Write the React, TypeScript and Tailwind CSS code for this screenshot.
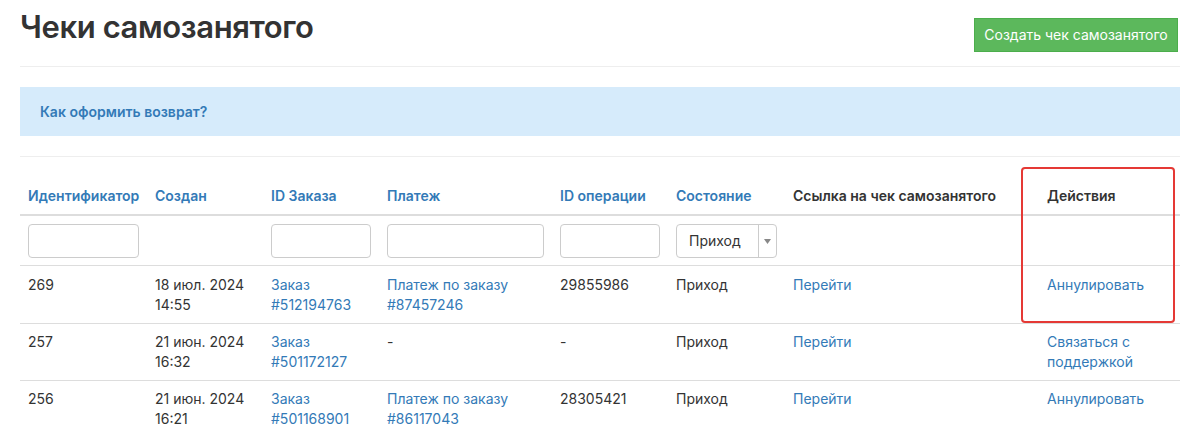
import React from 'react';

type Row = {
  id: string;
  date: string;
  time: string;
  order: string;
  payment: string | null;
  operation: string;
  state: string;
  action: string[];
};

const rows: Row[] = [
  { id: '269', date: '18 июл. 2024', time: '14:55', order: '#512194763', payment: '#87457246', operation: '29855986', state: 'Приход', action: ['Аннулировать'] },
  { id: '257', date: '21 июн. 2024', time: '16:32', order: '#501172127', payment: null, operation: '-', state: 'Приход', action: ['Связаться с', 'поддержкой'] },
  { id: '256', date: '21 июн. 2024', time: '16:21', order: '#501168901', payment: '#86117043', operation: '28305421', state: 'Приход', action: ['Аннулировать'] },
];

const FilterInput: React.FC<{ width: string }> = ({ width }) => (
  <input type="text" className={`${width} h-[34px] rounded-[4px] border border-[#ccc] bg-white block`} />
);

const App: React.FC = () => {
  return (
    <div className="w-[1200px] h-[434px] overflow-hidden bg-white font-['Inter',sans-serif] text-[14px] leading-[20px] text-[#333]">
      <div className="px-[20px] pt-[18px]">
        {/* Header */}
        <div className="flex items-start justify-between h-[34px] mr-[2px]">
          <h1 className="text-[31px] leading-[30px] font-semibold text-[#333] tracking-[-0.4px] -mt-[6px]">Чеки самозанятого</h1>
          <button className="h-[34px] w-[204px] bg-[#5cb85c] text-white text-[14px] border border-[#4cae4c]">
            Создать чек самозанятого
          </button>
        </div>
        <hr className="mt-[14px] border-t border-[#eee]" />

        {/* Info */}
        <div className="mt-[20px] h-[49px] bg-[#d6ebfb] px-[20px] flex items-center">
          <a className="font-semibold text-[#337ab7] text-[14px]">Как оформить возврат?</a>
        </div>
        <hr className="mt-[20px] border-t border-[#eee]" />

        {/* Table */}
        <div className="relative mt-[21px]">
          <table className="w-full table-fixed border-collapse">
            <colgroup>
              <col className="w-[127px]" />
              <col className="w-[116px]" />
              <col className="w-[116px]" />
              <col className="w-[173px]" />
              <col className="w-[116px]" />
              <col className="w-[117px]" />
              <col className="w-[254px]" />
              <col />
            </colgroup>
            <thead>
              <tr className="border-b-2 border-[#ddd] text-left">
                <th className="px-[8px] py-[8px] font-semibold text-[#337ab7] whitespace-nowrap">Идентификатор</th>
                <th className="px-[8px] py-[8px] font-semibold text-[#337ab7]">Создан</th>
                <th className="px-[8px] py-[8px] font-semibold text-[#337ab7]">ID Заказа</th>
                <th className="px-[8px] py-[8px] font-semibold text-[#337ab7]">Платеж</th>
                <th className="px-[8px] py-[8px] font-semibold text-[#337ab7]">ID операции</th>
                <th className="px-[8px] py-[8px] font-semibold text-[#337ab7]">Состояние</th>
                <th className="px-[8px] py-[8px] font-semibold text-[#333] whitespace-nowrap">Ссылка на чек самозанятого</th>
                <th className="px-[8px] py-[8px] font-semibold text-[#333]">Действия</th>
              </tr>
            </thead>
            <tbody>
              <tr className="border-b border-[#ddd]">
                <td className="px-[8px] pt-[8px] pb-[7px] align-top"><FilterInput width="w-[111px]" /></td>
                <td className="px-[8px] py-[8px]"></td>
                <td className="px-[8px] pt-[8px] pb-[7px] align-top"><FilterInput width="w-[100px]" /></td>
                <td className="px-[8px] pt-[8px] pb-[7px] align-top"><FilterInput width="w-[157px]" /></td>
                <td className="px-[8px] pt-[8px] pb-[7px] align-top"><FilterInput width="w-[100px]" /></td>
                <td className="px-[8px] pt-[8px] pb-[7px] align-top">
                  <div className="w-[101px] h-[34px] rounded-[4px] border border-[#ccc] bg-white flex items-center">
                    <span className="flex-1 pl-[12px] text-[#333]">Приход</span>
                    <span className="w-[18px] h-full border-l border-[#ccc] flex items-center justify-center">
                      <svg width="7" height="5" viewBox="0 0 7 5"><path d="M0 0h7L3.5 5z" fill="#888" /></svg>
                    </span>
                  </div>
                </td>
                <td className="px-[8px] py-[8px]"></td>
                <td className="px-[8px] py-[8px]"></td>
              </tr>
              {rows.map((r, i) => (
                <tr key={r.id} className="border-b border-[#ddd] align-top">
                  <td className={`px-[8px] py-[8px] ${i === 0 ? 'pt-[9px]' : ''}`}>{r.id}</td>
                  <td className={`px-[8px] py-[8px] ${i === 0 ? 'pt-[9px]' : ''}`}>
                    <div className="whitespace-nowrap">{r.date}</div>
                    <div>{r.time}</div>
                  </td>
                  <td className={`px-[8px] py-[8px] text-[#337ab7] ${i === 0 ? 'pt-[9px]' : ''}`}>
                    <div>Заказ</div>
                    <div>{r.order}</div>
                  </td>
                  <td className={`px-[8px] py-[8px] ${i === 0 ? 'pt-[9px]' : ''}`}>
                    {r.payment ? (
                      <a className="text-[#337ab7]">
                        <div>Платеж по заказу</div>
                        <div>{r.payment}</div>
                      </a>
                    ) : (
                      '-'
                    )}
                  </td>
                  <td className={`px-[8px] py-[8px] ${i === 0 ? 'pt-[9px]' : ''}`}>{r.operation}</td>
                  <td className={`px-[8px] py-[8px] ${i === 0 ? 'pt-[9px]' : ''}`}>{r.state}</td>
                  <td className={`px-[8px] py-[8px] text-[#337ab7] ${i === 0 ? 'pt-[9px]' : ''}`}>Перейти</td>
                  <td className={`px-[8px] py-[8px] text-[#337ab7] ${i === 0 ? 'pt-[9px]' : ''}`}>
                    {r.action.map((a) => (
                      <div key={a}>{a}</div>
                    ))}
                  </td>
                </tr>
              ))}
            </tbody>
          </table>
          {/* Highlight over the actions column */}
          <div className="absolute left-[1001px] top-[-11px] w-[154px] h-[156px] rounded-[4px] border-2 border-[#e53935] pointer-events-none" />
        </div>
      </div>
    </div>
  );
};

export default App;
